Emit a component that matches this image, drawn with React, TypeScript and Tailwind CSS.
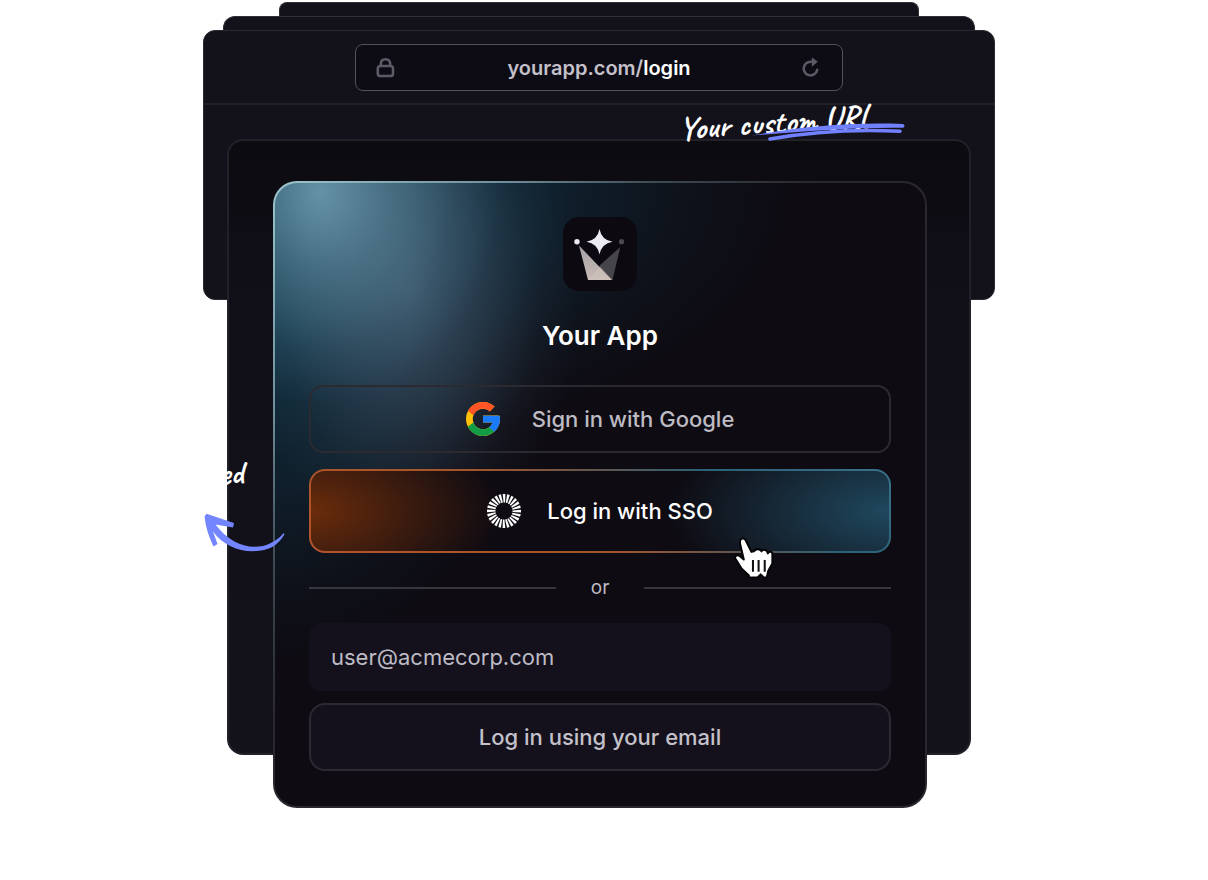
import React from "react";

function LockIcon() {
  return (
    <svg width="20" height="22" viewBox="0 0 20 22" fill="none" stroke="#5d5a66" strokeWidth="2.6" aria-hidden="true">
      <rect x="1.8" y="9" width="15.2" height="10" rx="2.6" />
      <path d="M4.800 9V7C4.800 4 6.600 2.200 9.400 2.200s4.800 1.800 4.800 4.800v2" />
    </svg>
  );
}

function ReloadIcon() {
  return (
    <svg width="20" height="22" viewBox="0 0 20 22" fill="none" stroke="#5d5a66" strokeWidth="2.5" aria-hidden="true">
      <path d="M11 4.800H8.500a6.800 6.800 0 1 0 6.700 8" strokeLinecap="round" />
      <path d="M9.800.2 15.800 4.800 9.800 9.800Z" fill="#5d5a66" stroke="none" />
    </svg>
  );
}

function CrownLogo() {
  return (
    <svg width="74" height="74" viewBox="0 0 74 74" aria-hidden="true">
      <defs>
        <linearGradient id="crown" x1="0" y1="0" x2="0" y2="1">
          <stop offset="0" stopColor="#a5a0a6" />
          <stop offset="1" stopColor="#c9bbb5" />
        </linearGradient>
      </defs>
      <path d="M57.300 30 49.500 63 36 49Z" fill="#47454c" />
      <path d="M16 28.500 49 63H25Z" fill="url(#crown)" />
      <path d="M37 49.500 49.500 63H25Z" fill="#d5c8c1" opacity=".45" />
      <path d="M36.500 12q2 11 13 12.700q-11 1.800-13 12.800q-2-11-13-12.800q11-1.700 13-12.700Z" fill="#eceaf3" />
      <circle cx="14" cy="24.700" r="2.700" fill="#eceaf3" />
      <circle cx="58.500" cy="24.700" r="2.600" fill="#4b4950" />
    </svg>
  );
}

function GoogleIcon() {
  return (
    <svg width="34" height="34" viewBox="4 4 40 40" aria-hidden="true">
      <path fill="#FFC107" d="M43.611 20.083H42V20H24v8h11.303c-1.649 4.657-6.080 8-11.303 8-6.627 0-12-5.373-12-12s5.373-12 12-12c3.059 0 5.842 1.154 7.961 3.039l5.657-5.657C34.046 6.053 29.268 4 24 4 12.955 4 4 12.955 4 24s8.955 20 20 20 20-8.955 20-20c0-1.341-.138-2.650-.389-3.917z" />
      <path fill="#FF5425" d="m6.306 14.691 6.571 4.819C14.655 15.108 18.961 12 24 12c3.059 0 5.842 1.154 7.961 3.039l5.657-5.657C34.046 6.053 29.268 4 24 4 16.318 4 9.656 8.337 6.306 14.691z" />
      <path fill="#109D45" d="M24 44c5.166 0 9.860-1.977 13.409-5.192l-6.190-5.238C29.211 35.091 26.715 36 24 36c-5.202 0-9.619-3.317-11.283-7.946l-6.522 5.025C9.505 39.556 16.227 44 24 44z" />
      <path fill="#1A7CF9" d="M43.611 20.083H24v8h11.303a12.040 12.040 0 0 1-4.087 5.571l6.193 5.238C36.971 39.205 44 34 44 24c0-1.341-.138-2.650-.389-3.917z" />
    </svg>
  );
}

const rays = Array.from({ length: 24 }, (_, i) => i * 15);

function SsoIcon() {
  return (
    <svg width="34" height="34" viewBox="0 0 34 34" aria-hidden="true">
      {rays.map((angle) => (
        <path key={angle} d="M15.700 0h2.700l-.3 8.500h-1.500Z" fill="#fff" transform={`rotate(${angle} 17 17)`} />
      ))}
    </svg>
  );
}

function HandCursor() {
  return (
    <svg width="43" height="45" viewBox="0 0 42 44" aria-hidden="true">
      <path
        d="M9 2.500C6.500 3 6.500 6 7.200 9L10.500 23 6.500 19.500C3.500 17.800 1 20 2.500 22.500L8.500 32 15.500 38.500V40.500H24L27 37.500 30 40.500H33L34.500 34 38.500 27V17.500C38.500 14.800 34.800 14.800 34 17 34 13 29 12.600 27.800 15 27 12.200 22 12 20.500 15L18 15.500 12.500 4.500C11.800 2.800 10.500 2.200 9 2.500Z"
        fill="#fff"
        stroke="#050507"
        strokeWidth="2"
        strokeLinejoin="round"
      />
      <path d="M19.500 23.500v11.500M25 23.500v11.500M31 23.500v11.500" stroke="#111" strokeWidth="2" />
    </svg>
  );
}

function Underline() {
  return (
    <svg width="156" height="20" viewBox="0 0 156 20" fill="#7180ff" stroke="#7180ff" strokeLinecap="round" aria-hidden="true">
      <path d="M1 14.500C50 5.500 100 1 152 3Q155 5 152 6.800C102 6.200 50 10.500 1 14.500Z" stroke="none" />
      <path d="M19 18C58 11 104 8 149 10.200" fill="none" strokeWidth="3.600" />
    </svg>
  );
}

function CurvedArrow() {
  return (
    <svg width="84" height="44" viewBox="0 0 84 44" fill="#7385ff" aria-hidden="true">
      <path d="M1.500 3.500 3.500 .8 31 10 30 14.500 12.500 11.500C25 28 42 36.500 60 33 69 30.500 76 26 80.500 20L81.500 21.500C76 30 70 35 61 37 42 41 22 35 10 18.500L14.500 31 10.500 33.500C6 24 2.500 14 1.500 3.500Z" />
    </svg>
  );
}

export default function App() {
  return (
    <main className="flex min-h-screen flex-col items-center overflow-hidden bg-white pt-0.5 pr-2.5 font-['Inter',sans-serif]">
      <div className="h-3.5 w-full max-w-[640px] rounded-t-lg border border-b-0 border-[#303038] bg-[#13111a]" />
      <div className="h-3.5 w-full max-w-[752px] rounded-t-xl border border-b-0 border-[#303034] bg-[#13111a]" />

      <div className="relative grid w-full max-w-[792px] justify-items-center">
        <section className="col-start-1 row-start-1 h-[270px] w-full rounded-xl border border-[#2b2a31] bg-[#13111a]">
          <header className="flex justify-center border-b-2 border-[#222129] pt-[13px] pb-3">
            <div className="flex h-[47px] w-full max-w-[488px] items-center justify-between rounded-lg border border-[#53515c] bg-[#0d0b14] px-5">
              <LockIcon />
              <p className="text-xl font-semibold text-[#c4c1ca]">
                yourapp.com/<span className="text-white">login</span>
              </p>
              <button type="button" aria-label="Reload">
                <ReloadIcon />
              </button>
            </div>
          </header>
        </section>

        <div className="col-start-1 row-start-1 mt-[109px] mb-[53px] w-full max-w-[744px] rounded-2xl border-2 border-[#222129] bg-linear-to-b from-[#0c0b0f] via-[#100e17] via-20% to-[#14121b]" />

        <form
          onSubmit={(event) => event.preventDefault()}
          className="col-start-1 row-start-1 mt-[151px] ml-0.5 flex w-full max-w-[654px] rounded-3xl bg-[linear-gradient(135deg,#9cc6ce_0%,#6f8f9c_18%,#3d4a52_30%,#2a282e_42%,#2a282e_100%)] p-0.5"
        >
          <div className="flex w-full flex-col items-center rounded-[22px] bg-[#0e0b12] bg-[radial-gradient(ellipse_180px_210px_at_45px_10px,rgba(130,178,200,0.72),rgba(125,175,198,0.38)_38%,rgba(125,175,198,0.1)_75%,transparent),radial-gradient(ellipse_170px_270px_at_135px_110px,rgba(98,122,146,0.48),rgba(98,120,145,0.28)_40%,rgba(98,120,145,0.07)_75%,transparent),radial-gradient(ellipse_520px_270px_at_0px_0px,rgba(16,60,80,0.8),rgba(16,60,80,0.52)_45%,rgba(16,60,80,0.15)_78%,transparent),radial-gradient(ellipse_270px_360px_at_0px_120px,rgba(16,58,78,0.7),rgba(16,58,78,0.42)_50%,rgba(16,58,78,0.12)_80%,transparent)] px-[34px] pt-[34px] pb-[35px]">
            <div className="size-[74px] rounded-2xl bg-[#0c0a10]">
              <CrownLogo />
            </div>
            <h1 className="mt-[27px] text-[26px] leading-9 font-semibold text-white">Your App</h1>

            <button
              type="button"
              className="mt-[31px] flex h-[68px] w-full items-center justify-center gap-8 rounded-[14px] border-2 border-[#2b2a31] text-[22px] font-medium text-[#bdbbc3]"
            >
              <GoogleIcon />
              Sign in with Google
            </button>

            <button
              type="button"
              className="mt-4 flex h-[84px] w-full rounded-2xl bg-[linear-gradient(31deg,#b4532a_0%,#a5562c_42%,#62564e_59%,#2b6277_74%,#3a718b_100%)] p-0.5 text-[22px] font-medium text-white"
            >
              <span className="flex h-full w-full items-center justify-center gap-[26px] rounded-[14px] bg-[#0e0b12] bg-[radial-gradient(ellipse_190px_100px_at_0%_50%,#6b2c0b,transparent),radial-gradient(ellipse_220px_100px_at_100%_50%,#1f485e,transparent)]">
                <SsoIcon />
                Log in with SSO
              </span>
            </button>

            <div className="mt-[23px] flex w-full items-center gap-[35px] text-[19px] leading-6 text-[#bdbbc3]">
              <span className="h-0.5 flex-1 bg-[#38363d]" />
              or
              <span className="h-0.5 flex-1 bg-[#38363d]" />
            </div>

            <input
              type="email"
              aria-label="Email"
              defaultValue="user@acmecorp.com"
              className="mt-[23px] h-[68px] w-full rounded-xl bg-[#14111d] px-[22px] text-[22px] text-[#bdbbc3] outline-none"
            />
            <button
              type="submit"
              className="mt-3 h-[68px] w-full rounded-2xl border-2 border-[#2b2a31] bg-[#14111d] text-[22px] font-medium text-[#c4c1ca]"
            >
              Log in using your email
            </button>
          </div>
        </form>

        <p className="absolute top-[68px] left-[476px] -rotate-4 text-[33px] font-bold whitespace-nowrap text-white font-['Caveat','Lato',cursive]">
          Your custom URL
        </p>
        <div className="absolute top-[91px] left-[548px]">
          <Underline />
        </div>

        <div className="absolute top-[429px] -left-[138px] flex w-[180px] -rotate-4 flex-col items-end gap-2 text-[32px] leading-10 font-bold whitespace-nowrap text-white font-['Caveat','Lato',cursive]">
          <p>Launch Branded</p>
          <p className="pr-12">Access</p>
        </div>
        <div className="absolute top-[483px] left-0">
          <CurvedArrow />
        </div>

        <div className="absolute top-[506px] left-[530px]">
          <HandCursor />
        </div>
      </div>
    </main>
  );
}
